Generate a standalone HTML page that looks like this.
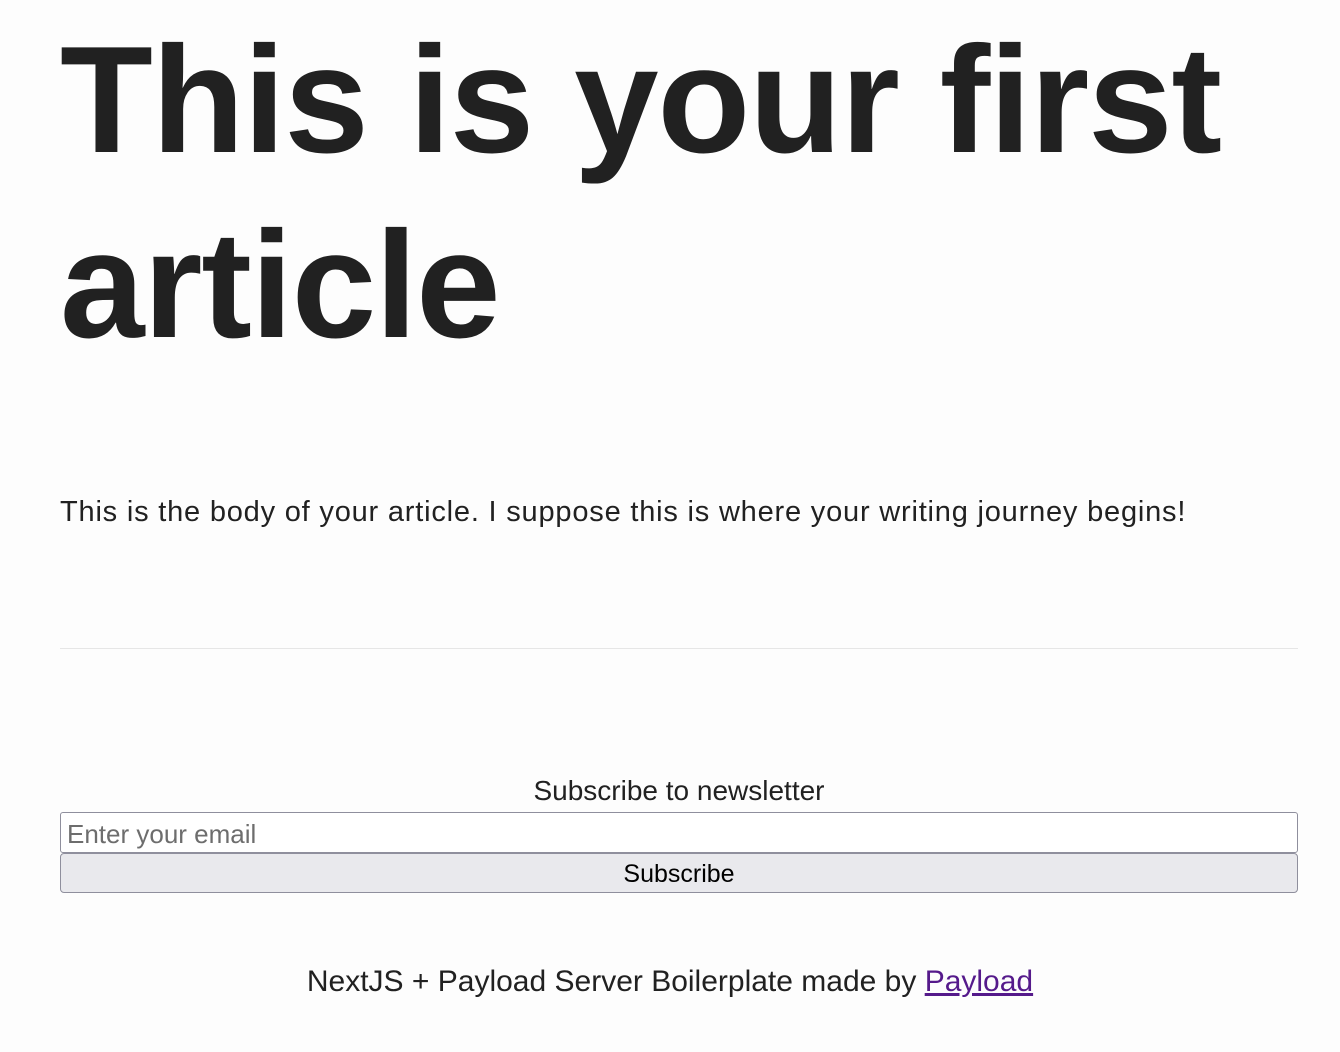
<!DOCTYPE html>
<html><head><meta charset="utf-8"><style>
body{margin:0;background:#fdfdfd;width:1340px;height:1052px;overflow:hidden;font-family:"Liberation Sans",sans-serif;color:#212121;position:relative}
h1{position:absolute;left:60px;top:8px;margin:0;font-size:152px;line-height:185px;font-weight:bold;letter-spacing:-1.2px;width:1260px}
.body{position:absolute;left:60px;top:492px;font-size:29px;letter-spacing:0.8px;line-height:40px;margin:0;white-space:nowrap}
hr{position:absolute;left:60px;top:648px;width:1238px;margin:0;border:0;border-top:1px solid #e6e6e6}
.lbl{position:absolute;left:60px;width:1238px;top:773px;text-align:center;font-size:28px;line-height:36px}
.inp{position:absolute;left:60px;top:812px;width:1236px;height:39px;border:1px solid #8f8f9d;border-radius:3px;background:#fff}
.inp span{position:absolute;left:6px;top:6px;font-size:26px;color:#6d6d6d;line-height:30px}
.btn{position:absolute;left:60px;top:853px;width:1236px;height:38px;border:1px solid #8f8f9d;border-radius:4px;background:#e9e9ed;text-align:center;font-size:25px;line-height:41px;color:#000}
.foot{position:absolute;left:0;width:1340px;top:963px;text-align:center;font-size:30px;line-height:38px}
.foot a{color:#551a8b;text-decoration:underline}
</style></head><body>
<h1>This is your first article</h1>
<p class="body">This is the body of your article. I suppose this is where your writing journey begins!</p>
<hr>
<div class="lbl">Subscribe to newsletter</div>
<div class="inp"><span>Enter your email</span></div>
<div class="btn">Subscribe</div>
<div class="foot">NextJS + Payload Server Boilerplate made by <a>Payload</a></div>
</body></html>
